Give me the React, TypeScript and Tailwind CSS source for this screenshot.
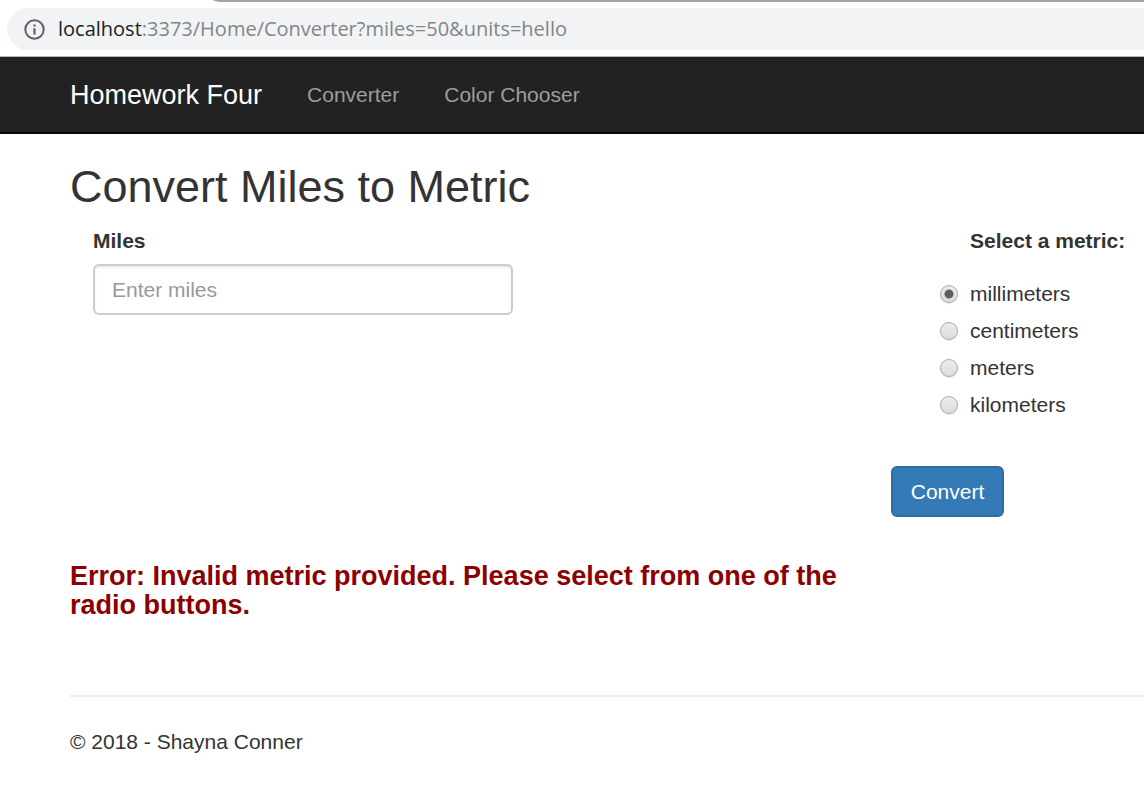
import { useState } from "react";

const metrics = ["millimeters", "centimeters", "meters", "kilometers"];

function AddressBar() {
  return (
    <header className="border-b border-[#b4b8b6] bg-white">
      <div className="ml-[213px] h-[2px] rounded-bl-[12px_2px] bg-[#a5a3a3]" />
      <div className="mt-[6px] mb-[6px] ml-[7px] flex h-[42px] items-center rounded-l-full bg-[#f1f3f4] pl-[17px]">
        <svg className="size-[21px] shrink-0" viewBox="0 0 21 21" aria-hidden="true">
          <circle cx="10.5" cy="10.5" r="9.2" fill="none" stroke="#5f6368" strokeWidth="2" />
          <path d="M9.4 5.4h2.2v2.2H9.4zM9.4 9.3h2.2v6.2H9.4z" fill="#5f6368" />
        </svg>
        <p className="ml-[13px] font-['Open_Sans','Noto_Sans',sans-serif] text-[20px] leading-[28px] whitespace-nowrap text-[#80868b]">
          <span className="text-[#202124]">localhost</span>:3373/Home/Converter?miles=50&amp;units=hello
        </p>
      </div>
    </header>
  );
}

function NavBar() {
  return (
    <nav className="flex h-[77px] items-center border-b-2 border-[#080808] bg-[#222] pl-[70px] text-[21px] text-[#9d9d9d]">
      <a href="#" className="text-[27px] text-white">
        Homework Four
      </a>
      <a href="#converter" className="ml-[45px]">
        Converter
      </a>
      <a href="#colors" className="ml-[45px]">
        Color Chooser
      </a>
    </nav>
  );
}

export default function App() {
  const [metric, setMetric] = useState("millimeters");
  const [miles, setMiles] = useState("");

  return (
    <div className="min-h-screen bg-white font-['Liberation_Sans',Arial,sans-serif] text-[21px] leading-[30px] text-[#333]">
      <AddressBar />
      <NavBar />
      <main className="pl-[70px]">
        <h2 className="pt-[28px] text-[45px] leading-[50px]">Convert Miles to Metric</h2>
        <form className="mt-[14px] flex justify-between" onSubmit={(e) => e.preventDefault()}>
          <div className="ml-[23px] w-[420px]">
            <label htmlFor="miles" className="block font-bold">
              Miles
            </label>
            <input
              id="miles"
              type="text"
              value={miles}
              onChange={(e) => setMiles(e.target.value)}
              placeholder="Enter miles"
              className="mt-[8px] block h-[51px] w-full rounded-[6px] border-2 border-[#ccc] px-[17px] shadow-[inset_0_2px_2px_rgba(0,0,0,0.075)] placeholder:text-[#999]"
            />
          </div>
          <div className="w-[253px] shrink-0">
            <fieldset>
              <legend className="pl-[79px] font-bold">Select a metric:</legend>
              <div className="flex flex-col gap-[7px] pt-[23px] pl-[49px]">
                {metrics.map((name) => (
                  <label key={name} className="flex items-center gap-[12px]">
                    <input
                      type="radio"
                      name="units"
                      value={name}
                      checked={metric === name}
                      onChange={() => setMetric(name)}
                      className="size-[18px] appearance-none rounded-full border border-[#a9a9a9] bg-[linear-gradient(#ededed,#dcdcdc)] shadow-[0_1px_1px_rgba(0,0,0,0.1)] checked:bg-[radial-gradient(circle,#5f5f5f_4px,transparent_5px),linear-gradient(#ededed,#dcdcdc)]"
                    />
                    {name}
                  </label>
                ))}
              </div>
            </fieldset>
            <button
              type="submit"
              className="mt-[46px] block h-[51px] w-[113px] rounded-[6px] border-2 border-[#2e6da4] bg-[#337ab7] text-center text-white"
            >
              Convert
            </button>
          </div>
        </form>
        <h3 className="mt-[45px] max-w-[800px] text-[27px] leading-[29px] font-bold text-[#8b0000]">
          Error: Invalid metric provided. Please select from one of the radio buttons.
        </h3>
        <hr className="mt-[75px] border-t-2 border-[#eee]" />
        <footer className="pt-[30px] pb-[30px]">© 2018 - Shayna Conner</footer>
      </main>
    </div>
  );
}
